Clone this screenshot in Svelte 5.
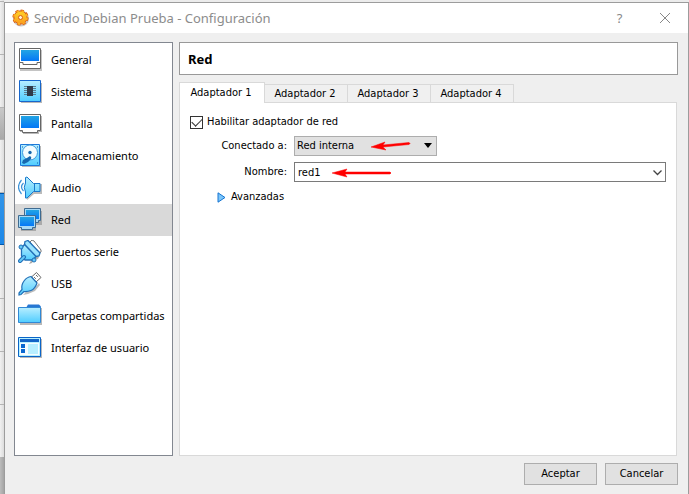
<script>
  const sections = ['General', 'Sistema', 'Pantalla', 'Almacenamiento', 'Audio', 'Red', 'Puertos serie', 'USB', 'Carpetas compartidas', 'Interfaz de usuario'];
  const tabs = ['Adaptador 1', 'Adaptador 2', 'Adaptador 3', 'Adaptador 4'];
  let current = $state('Red');
  let tab = $state('Adaptador 1');
  let enabled = $state(true);
  let attached = $state('Red interna');
  let name = $state('red1');
  let advanced = $state(false);
</script>

<div class="desktop">
  <div class="edge" aria-hidden="true">
    <i class="a"></i><i class="b"></i><i class="c"></i><i class="d"></i><i class="gap"></i><i class="sel"></i><i class="e"></i><i class="f"></i><i class="g"></i><i class="p"></i><i class="h"></i>
  </div>
  <main class="window">
    <header>
      <svg width="18" height="18" viewBox="0 0 18 18" aria-hidden="true">
        <defs><linearGradient id="gear" x2="0" y2="1"><stop stop-color="#ffd428" /><stop offset="1" stop-color="#fa9b20" /></linearGradient></defs>
        <circle cx="9" cy="9.500" r="7" fill="none" stroke="#c8c8c8" stroke-width="2" />
        <circle cx="8.500" cy="8.500" r="6.600" fill="url(#gear)" stroke="#d9601a" />
        <circle cx="8.500" cy="8.500" r="7.100" fill="none" stroke="#d9601a" stroke-width="2" stroke-dasharray="3.300 2.270" />
        <circle cx="8.500" cy="8.500" r="6.500" fill="none" stroke="#fdb021" stroke-width="1.800" stroke-dasharray="2.400 2.700" stroke-dashoffset="-.3" />
        <circle cx="8.500" cy="8.500" r="2" fill="#fff3d8" stroke="#d95f13" />
      </svg>
      <h1>Servido Debian Prueba - Configuración</h1>
      <button class="cap" aria-label="Ayuda">?</button>
      <button class="cap" aria-label="Cerrar"><svg width="12" height="12" viewBox="0 0 12 12"><path d="M1 1l10 10M11 1L1 11" stroke="#888" fill="none" /></svg></button>
    </header>

    <div class="body">
      <nav>
        {#each sections as s}
          <button class="item" class:active={s === current} onclick={() => (current = s)}>
            <svg width="24" height="24" viewBox="0 0 24 24" aria-hidden="true">
              {#if s === 'General'}
                <path d="M2 2h22v21H2z" fill="#c4c4c4" />
                <path d="M1.5 .5h21v20h-21z" fill="#fff" stroke="#666" />
                <path d="M3 2h18v11H3z" fill="url(#screen)" />
                <path d="M2 14.500h3v2h14v-2h3" fill="none" stroke="#666" />
              {:else if s === 'Sistema'}
                <path d="M3 3h21v20H3z" fill="#b8b8b8" />
                <path d="M1.500.500h21v21h-21z" fill="url(#sky)" stroke="#1766cc" />
                <path d="M6 6.500h12M6 8.500h12M6 10.500h12M6 12.500h12M6 14.500h12" stroke="#5c7f91" />
                <path d="M9 6h6v10H9z" fill="#303947" />
              {:else if s === 'Pantalla'}
                <path d="M2 4h22v16h-3v2H5v-2H2z" fill="#b8b8b8" />
                <path d="M1.500 2.500h21v16h-3v2h-15v-2h-3z" fill="#fff" stroke="#666" />
                <path d="M3 4h18v12H3z" fill="url(#screen)" />
              {:else if s === 'Almacenamiento'}
                <path d="M4 2h19v21H4z" fill="#b8b8b8" />
                <path d="M2.500.500h19v21h-19z" fill="url(#sky)" stroke="#1d78d8" />
                <circle cx="12" cy="8.500" r="7.500" fill="#f2fcff" stroke="#3c9bde" />
                <circle cx="12" cy="8.500" r="1.700" fill="#1768ae" />
                <path d="M12 12q2 1 1 3l-3 3-4 2-2-1 1-3 4-2z" fill="#1768ae" />
                <path d="M4 3h1M19 3h1M19 19h1" stroke="#135b9d" />
              {:else if s === 'Audio'}
                <path d="M7 8l2-6 7 6h8v10h-8l-7 6z" fill="#bbb" />
                <path d="M3.500 4Q-2.500 11 3.500 18M5.500 7Q1.500 11 5.500 15" fill="none" stroke="#3a92d8" stroke-width="1.200" />
                <path d="M7.500 1.500L9 1l6.500 6.500h6.500v8h-6.500L9 22H7.500V16Q5 11 7.500 7z" fill="url(#sky)" stroke="#1979cc" />
                <path d="M16.500 8v7" stroke="#1979cc" />
              {:else if s === 'Red'}
                <path d="M8 3h16v14h-6v6H3v-4H1V10h7z" fill="#aaa" />
                <path d="M6.500.500h16v12h-2v2h-12v-2h-2z" fill="#a6d8f6" stroke="#3e6b91" />
                <path d="M8 2h13v9H8z" fill="url(#screen)" />
                <path d="M.500 7.500h17v12h-3v2h-11v-2h-3z" fill="#a6d8f6" stroke="#3e6b91" />
                <path d="M2 9h14v9H2z" fill="url(#screen)" />
              {:else if s === 'Puertos serie'}
                <path d="M12 2l2-2 2 1 7 9v2l-3 2z" fill="#fff" stroke="#777" />
                <path d="M8 4l13 13-1 2-4 1-2 3-3 1 3-5z" fill="#aaa" />
                <path d="M7 1.500l3-1 12 12.500-1 3-3 .500L6.500 4.500z" fill="#9be3ff" stroke="#2170b8" stroke-width="1.300" />
                <path d="M6.500 4.500L18 16.500l-3.500 3.500H7L3.500 16V8z" fill="url(#sky)" stroke="#2170b8" stroke-width="1.300" />
                <circle cx="3" cy="7" r="2" fill="#64c9f8" stroke="#2170b8" /><circle cx="16" cy="20" r="2" fill="#64c9f8" stroke="#2170b8" />
                <path d="M6 17l-4 4" stroke="#2170b8" stroke-width="4" stroke-linecap="round" /><path d="M6 17l-4 4" stroke="#64c9f8" stroke-width="1.800" stroke-linecap="round" />
              {:else if s === 'USB'}
                <path d="M8 20l8-3 5-6 1 2-5 6-7 3-5 1z" fill="#bbb" />
                <path d="M13.500 5l5-4.500 4.500 5-5 4.500z" fill="#fff" stroke="#666" />
                <path d="M16 5l2 2M18 3l2 2" stroke="#333" stroke-dasharray="1 1" />
                <path d="M13 4.500l6 6.500q-2 6-6 7.500-4 1.500-7 1l-3 3-2 .500v-2L4 17.500Q3 13 6 9q3-4 7-4.500z" fill="url(#sky)" stroke="#2170b8" stroke-width="1.200" />
              {:else if s === 'Carpetas compartidas'}
                <path d="M2 4h22v17H2z" fill="#b8b8b8" />
                <path d="M8 4l2-3.500h11l2 2V5H8z" fill="#2776d2" />
                <path d="M.500 3.500h22v15h-22z" fill="url(#sky)" stroke="#3088d5" />
              {:else}
                <path d="M2 3h22v19H2z" fill="#b8b8b8" />
                <path d="M.500 1.500h22v19h-22z" fill="#b8f1ff" stroke="#0b65c8" />
                <path d="M2 3h19v3H2z" fill="#1464c6" />
                <path d="M2 7h19v12H2z" fill="#f6fcff" />
                <path d="M3 8h4v4H3zM3 13h4v4H3z" fill="#0867d0" />
                <path d="M10 8h10v10H10z" fill="#b8efff" />
              {/if}
            </svg>
            <span>{s}</span>
          </button>
        {/each}
      </nav>

      <section>
        <h2>{current}</h2>
        <div class="tabs" role="tablist">
          {#each tabs as t}
            <button role="tab" aria-selected={t === tab} onclick={() => (tab = t)}>{t}</button>
          {/each}
        </div>
        <div class="panel" role="tabpanel">
          <label class="check"><input type="checkbox" bind:checked={enabled} />Habilitar adaptador de red</label>
          <div class="form">
            <label for="attached">Conectado a:</label>
            <div class="field mode">
              <select id="attached" bind:value={attached}><option>Red interna</option><option>NAT</option></select>
              <svg class="drop" width="8" height="5" viewBox="0 0 8 5"><path d="M0 0h8L4 5z" /></svg>
              <svg class="note first" width="40" height="10" viewBox="0 0 40 10"><path d="M0 6l14-5-2 3 26-2.500q2 1 0 2L12 6l3 3z" fill="#f00" stroke="#f00" stroke-width=".5" /></svg>
            </div>
            <label for="name">Nombre:</label>
            <div class="field">
              <input id="name" type="text" bind:value={name} />
              <svg class="chev" width="9" height="6" viewBox="0 0 9 6"><path d="M.500.500l4 4 4-4" fill="none" stroke="#444" stroke-width="1.300" /></svg>
              <svg class="note second" width="60" height="10" viewBox="0 0 60 10"><path d="M0 5l15-4-2 3h45q2 1 0 2H13l2 3z" fill="#f00" stroke="#f00" stroke-width=".5" /></svg>
            </div>
          </div>
          <button class="adv" aria-expanded={advanced} onclick={() => (advanced = !advanced)}>
            <svg width="9" height="11" viewBox="0 0 9 11"><path d="M1 .8v9.400L8 5.500z" fill="#7cc6fa" stroke="#1675d1" stroke-linejoin="round" /></svg>Avanzadas
          </button>
        </div>
      </section>
    </div>
    <footer><button>Aceptar</button><button>Cancelar</button></footer>
  </main>
  <svg class="defs" width="0" height="0" aria-hidden="true"><defs>
    <linearGradient id="screen" x2="0" y2="1"><stop stop-color="#23a5e4" /><stop offset="1" stop-color="#0477f7" /></linearGradient>
    <linearGradient id="sky" x2="0" y2="1"><stop stop-color="#b8eeff" /><stop offset="1" stop-color="#50cdff" /></linearGradient>
  </defs></svg>
</div>

<style>
  :global(body) { margin: 0; }
  * { box-sizing: border-box; }
  .desktop { display: flex; min-height: 100vh; padding-top: 2px; background: #ececec; font: 11px/16px "DejaVu Sans Condensed", "DejaVu Sans", sans-serif; font-stretch: condensed; color: #000; }
  button, input, select { font: inherit; color: inherit; margin: 0; border-radius: 0; }
  .edge { width: 4px; flex: none; display: flex; flex-direction: column; margin-top: -2px; background: linear-gradient(90deg, #f0f0f0, #dcdcdc); }
  .edge i { flex: none; border-bottom: 1px solid #b4b4b4; }
  .a { height: 2px; } .b { height: 53px; } .c { height: 53px; }
  .edge .d { height: 32px; background: linear-gradient(#c8c8c8, #a9a9a9); }
  .edge .gap { height: 53px; }
  .edge .sel { height: 52px; background: linear-gradient(#3295e8, #1c87e8); border: 1px solid #0058ad; border-width: 1px 0; }
  .e { height: 54px; } .f { height: 53px; } .g { height: 53px; }
  .edge .p { height: 52px; border: 0; }
  .edge .h { flex: 1; background: linear-gradient(90deg, #bcbcbc, #a4a4a4); border: 0; }
  .window { flex: 1; min-width: 0; display: flex; flex-direction: column; background: #efefef; border: 1px solid #9c9c9c; border-bottom: 0; }
  header { height: 30px; background: #fff; display: flex; align-items: center; padding: 0 1px 0 7px; font-family: "Noto Sans", sans-serif; font-stretch: normal; }
  h1 { flex: 1; margin: 0 0 0 4px; font-size: 13px; font-weight: 400; color: #8c8c8c; }
  .cap { width: 45px; height: 30px; border: 0; padding: 0; background: none; color: #888; font-size: 13px; display: grid; place-items: center; }
  .body { flex: 1; display: flex; gap: 6px; padding: 9px 10px 0 9px; }
  nav { width: 159px; flex: none; border: 1px solid #828790; background: #fff; padding-top: 1px; font-family: "Noto Sans", sans-serif; font-size: 11px; font-stretch: normal; }
  .item { width: 100%; height: 32px; border: 0; padding: 0 0 0 3px; background: none; display: flex; align-items: center; gap: 9px; text-align: left; white-space: nowrap; }
  .item svg { flex: none; }
  .item.active { background: #d9d9d9; }
  section { flex: 1; min-width: 0; display: flex; flex-direction: column; }
  h2 { margin: 0; height: 33px; border: 1px solid #999; background: #fff; padding-left: 8px; font: bold 13px/32px "Noto Sans", sans-serif; }
  .tabs { display: flex; align-items: flex-end; height: 20px; margin-top: 7px; }
  .tabs button { width: 83px; height: 18px; border: 1px solid #d9d9d9; border-left-width: 0; border-bottom: 0; background: #f0f0f0; padding: 0 2px 0 0; }
  .tabs button[aria-selected="true"] { width: 86px; height: 21px; border-left-width: 1px; background: #fff; margin-bottom: -1px; z-index: 1; }
  .panel { flex: 1; border: 1px solid #d9d9d9; background: #fff; padding: 10px; margin-right: 1px; }
  .check { display: flex; align-items: center; gap: 4px; height: 18px; }
  .check input { appearance: none; width: 13px; height: 13px; border: 1px solid #333; background: #fff; display: grid; place-items: center; }
  .check input:checked::after { content: ""; width: 9px; height: 5px; border: solid #333; border-width: 0 0 1px 1px; transform: rotate(-45deg); margin-top: -3px; }
  .form { display: grid; grid-template-columns: 97px 1fr; column-gap: 7px; row-gap: 6px; margin-top: 5px; align-items: center; }
  .form label { text-align: right; }
  .field { position: relative; height: 20px; }
  .mode { width: 143px; }
  .field select, .field input { width: 100%; height: 20px; display: block; padding: 0 3px; border: 1px solid #7a7a7a; background: #fff; }
  .field select { appearance: none; background: #e1e1e1; border-color: #adadad; padding: 0 2px; }
  .drop { position: absolute; right: 5px; top: 7px; }
  .chev { position: absolute; right: 4px; top: 8px; }
  .note { position: absolute; pointer-events: none; }
  .first { left: 77px; top: 5px; } .second { left: 38px; top: 6px; }
  .adv { display: flex; align-items: center; gap: 5px; border: 0; background: none; padding: 0; margin: 7px 0 0 27px; }
  footer { display: flex; justify-content: flex-end; gap: 8px; padding: 7px 10px 9px; }
  footer button { width: 73px; height: 22px; border: 1px solid #adadad; background: #e1e1e1; padding: 0; }
  .defs { position: absolute; }
</style>
